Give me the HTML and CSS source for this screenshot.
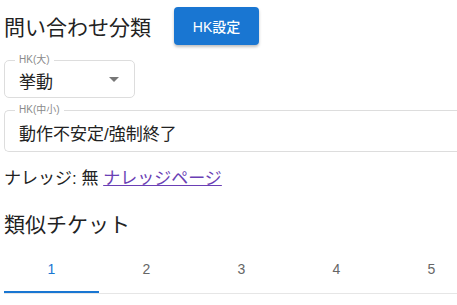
FILE: index.html
```html
<!DOCTYPE html>
<html lang="ja">
<head>
  <meta charset="UTF-8" />
  <meta name="viewport" content="width=device-width, initial-scale=1.0" />
  <title>問い合わせ分類</title>
  <link rel="stylesheet" href="styles.css">
</head>
<body>
  <div class="page">
    <div class="title-row">
      <h2 class="heading">問い合わせ分類</h2>
      <button type="button" class="btn">HK設定</button>
    </div>

    <div class="field field-small">
      <span class="field-label">HK(大)</span>
      <div class="field-value">挙動</div>
      <span class="arrow"></span>
    </div>

    <div class="field field-wide">
      <span class="field-label">HK(中小)</span>
      <div class="field-value">動作不安定/強制終了</div>
    </div>

    <p class="knowledge">
      ナレッジ: 無 <a href="#" class="knowledge-link">ナレッジページ</a>
    </p>

    <h2 class="heading similar">類似チケット</h2>

    <div class="tabs">
      <div class="tab active">1</div>
      <div class="tab">2</div>
      <div class="tab">3</div>
      <div class="tab">4</div>
      <div class="tab">5</div>
    </div>
  </div>
</body>
</html>
```

FILE: styles.css
```css
body {
  font-family: "Liberation Sans", "Noto Sans CJK JP", sans-serif;
  background-color: #fff;
  color: #222;
  margin: 0;
  padding: 0;
  overflow: hidden;
}

.page {
  width: 490px;
  padding-left: 4px;
}

.title-row {
  display: flex;
  align-items: center;
  gap: 23px;
  padding-top: 7px;
}

.heading {
  font-size: 21px;
  font-weight: 400;
  margin: 0;
  color: #222;
}

.btn {
  background-color: #1976d2;
  color: white;
  font-family: inherit;
  font-size: 14px;
  font-weight: 500;
  width: 85px;
  height: 38px;
  border: none;
  border-radius: 4px;
  box-shadow: 0 2px 3px rgba(0, 0, 0, 0.25);
  cursor: pointer;
}

.field {
  position: relative;
  box-sizing: border-box;
  border: 1px solid #ddd;
  border-radius: 5px;
  padding: 0 14px;
  display: flex;
  align-items: center;
}

.field-small {
  width: 131px;
  height: 38px;
  margin-top: 15px;
}

.field-wide {
  height: 42px;
  margin-top: 12px;
  border-right: none;
}

.field-label {
  position: absolute;
  top: -7px;
  left: 10px;
  padding: 0 4px;
  background: #fff;
  font-size: 10px;
  line-height: 12px;
  color: #8a8a8a;
}

.field-value {
  font-size: 17px;
  padding-top: 2px;
}

.arrow {
  position: absolute;
  right: 15px;
  top: 16px;
  width: 0;
  height: 0;
  border-left: 5px solid transparent;
  border-right: 5px solid transparent;
  border-top: 5px solid #777;
}

.knowledge {
  font-size: 17px;
  margin: 12px 0 0;
}

.knowledge-link {
  color: #6a3fb5;
}

.similar {
  margin-top: 19px;
}

.tabs {
  display: flex;
  margin-top: 15px;
  border-bottom: 1px solid #e6e6e6;
}

.tab {
  width: 95px;
  text-align: center;
  font-size: 14px;
  color: #666;
  padding: 8px 0 16px;
}

.tab.active {
  color: #1976d2;
  box-shadow: inset 0 -2px 0 #1976d2;
}
```
